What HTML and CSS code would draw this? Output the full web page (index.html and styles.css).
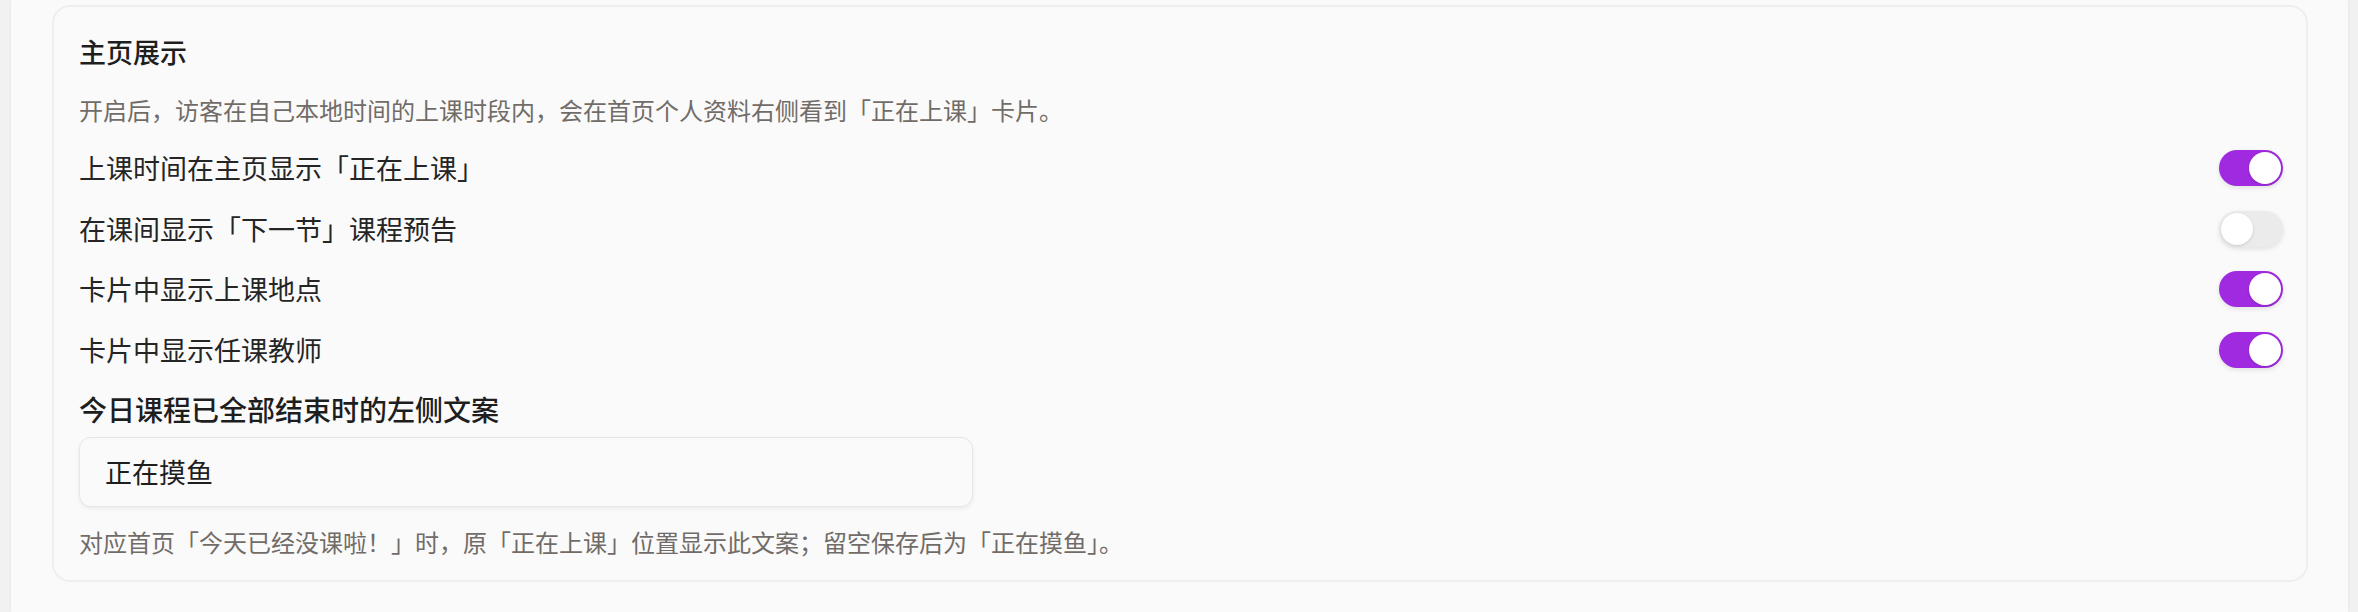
FILE: index.html
```html
<!DOCTYPE html>
<html lang="zh-CN">
<head>
<meta charset="utf-8">
<title>主页展示</title>
<link rel="stylesheet" href="styles.css">
</head>
<body>
  <div class="panel">
    <section class="card">
      <h2 class="card-title">主页展示</h2>
      <p class="desc">开启后，访客在自己本地时间的上课时段内，会在首页个人资料右侧看到「正在上课」卡片。</p>
      <div class="rows">
        <div class="row">
          <span class="row-label">上课时间在主页显示「正在上课」</span>
          <span class="switch on"><span class="knob"></span></span>
        </div>
        <div class="row">
          <span class="row-label">在课间显示「下一节」课程预告</span>
          <span class="switch"><span class="knob"></span></span>
        </div>
        <div class="row">
          <span class="row-label">卡片中显示上课地点</span>
          <span class="switch on"><span class="knob"></span></span>
        </div>
        <div class="row">
          <span class="row-label">卡片中显示任课教师</span>
          <span class="switch on"><span class="knob"></span></span>
        </div>
      </div>
      <label class="field-label" for="idle-text">今日课程已全部结束时的左侧文案</label>
      <input id="idle-text" class="text-input" type="text" value="正在摸鱼">
      <p class="help">对应首页「今天已经没课啦！」时，原「正在上课」位置显示此文案；留空保存后为「正在摸鱼」。</p>
    </section>
  </div>
</body>
</html>
```

FILE: styles.css
```css
* {
  box-sizing: border-box;
}

html, body {
  margin: 0;
  padding: 0;
}

body {
  background: #f1f1f1;
  font-family: "Noto Sans CJK SC", "Noto Sans", sans-serif;
  color: #232323;
  height: 612px;
  overflow: hidden;
}

.panel {
  margin: 0 10px 0 11px;
  padding: 5px 40px 30px 41px;
  background: #fafafa;
  box-shadow: 0 0 3px rgba(0, 0, 0, 0.07);
  min-height: 612px;
}

.card {
  border: 2px solid #efefef;
  border-radius: 18px;
  background: #fafafa;
  padding: 25px 23px 20px 25px;
  display: flex;
  flex-direction: column;
}

.card-title {
  margin: 0;
  font-size: 27px;
  line-height: 40px;
  font-weight: 500;
  color: #1e1e1e;
}

.desc {
  margin: 20px 0 0;
  font-size: 24px;
  line-height: 36px;
  color: #716c68;
}

.rows {
  margin-top: 22px;
  display: flex;
  flex-direction: column;
  gap: 24.5px;
}

.row {
  display: flex;
  align-items: center;
  justify-content: space-between;
  height: 36px;
}

.row-label {
  font-size: 27px;
  line-height: 36px;
  color: #252525;
}

.switch {
  position: relative;
  width: 64px;
  height: 36px;
  border-radius: 18px;
  background: #ebebeb;
  box-shadow: 0 2px 5px rgba(0, 0, 0, 0.10);
  flex: none;
}

.switch.on {
  background: #a02adf;
}

.knob {
  position: absolute;
  top: 2px;
  left: 2px;
  width: 32px;
  height: 32px;
  border-radius: 50%;
  background: #ffffff;
  box-shadow: 0 1px 3px rgba(0, 0, 0, 0.14);
}

.switch.on .knob {
  left: 30px;
}

.field-label {
  margin-top: 21.5px;
  font-size: 28px;
  line-height: 40px;
  font-weight: 500;
  color: #1e1e1e;
}

.text-input {
  margin-top: 7.5px;
  width: 894px;
  height: 70px;
  padding: 0 25px;
  border: 1.5px solid #e6e6e6;
  border-radius: 12px;
  background: #fafafa;
  box-shadow: 0 2px 4px rgba(0, 0, 0, 0.06);
  font-family: "Noto Sans CJK SC", "Noto Sans", sans-serif;
  font-size: 27px;
  color: #1e1e1e;
  outline: none;
}

.help {
  margin: 17px 0 0;
  font-size: 24px;
  line-height: 36px;
  color: #716c68;
}
```
